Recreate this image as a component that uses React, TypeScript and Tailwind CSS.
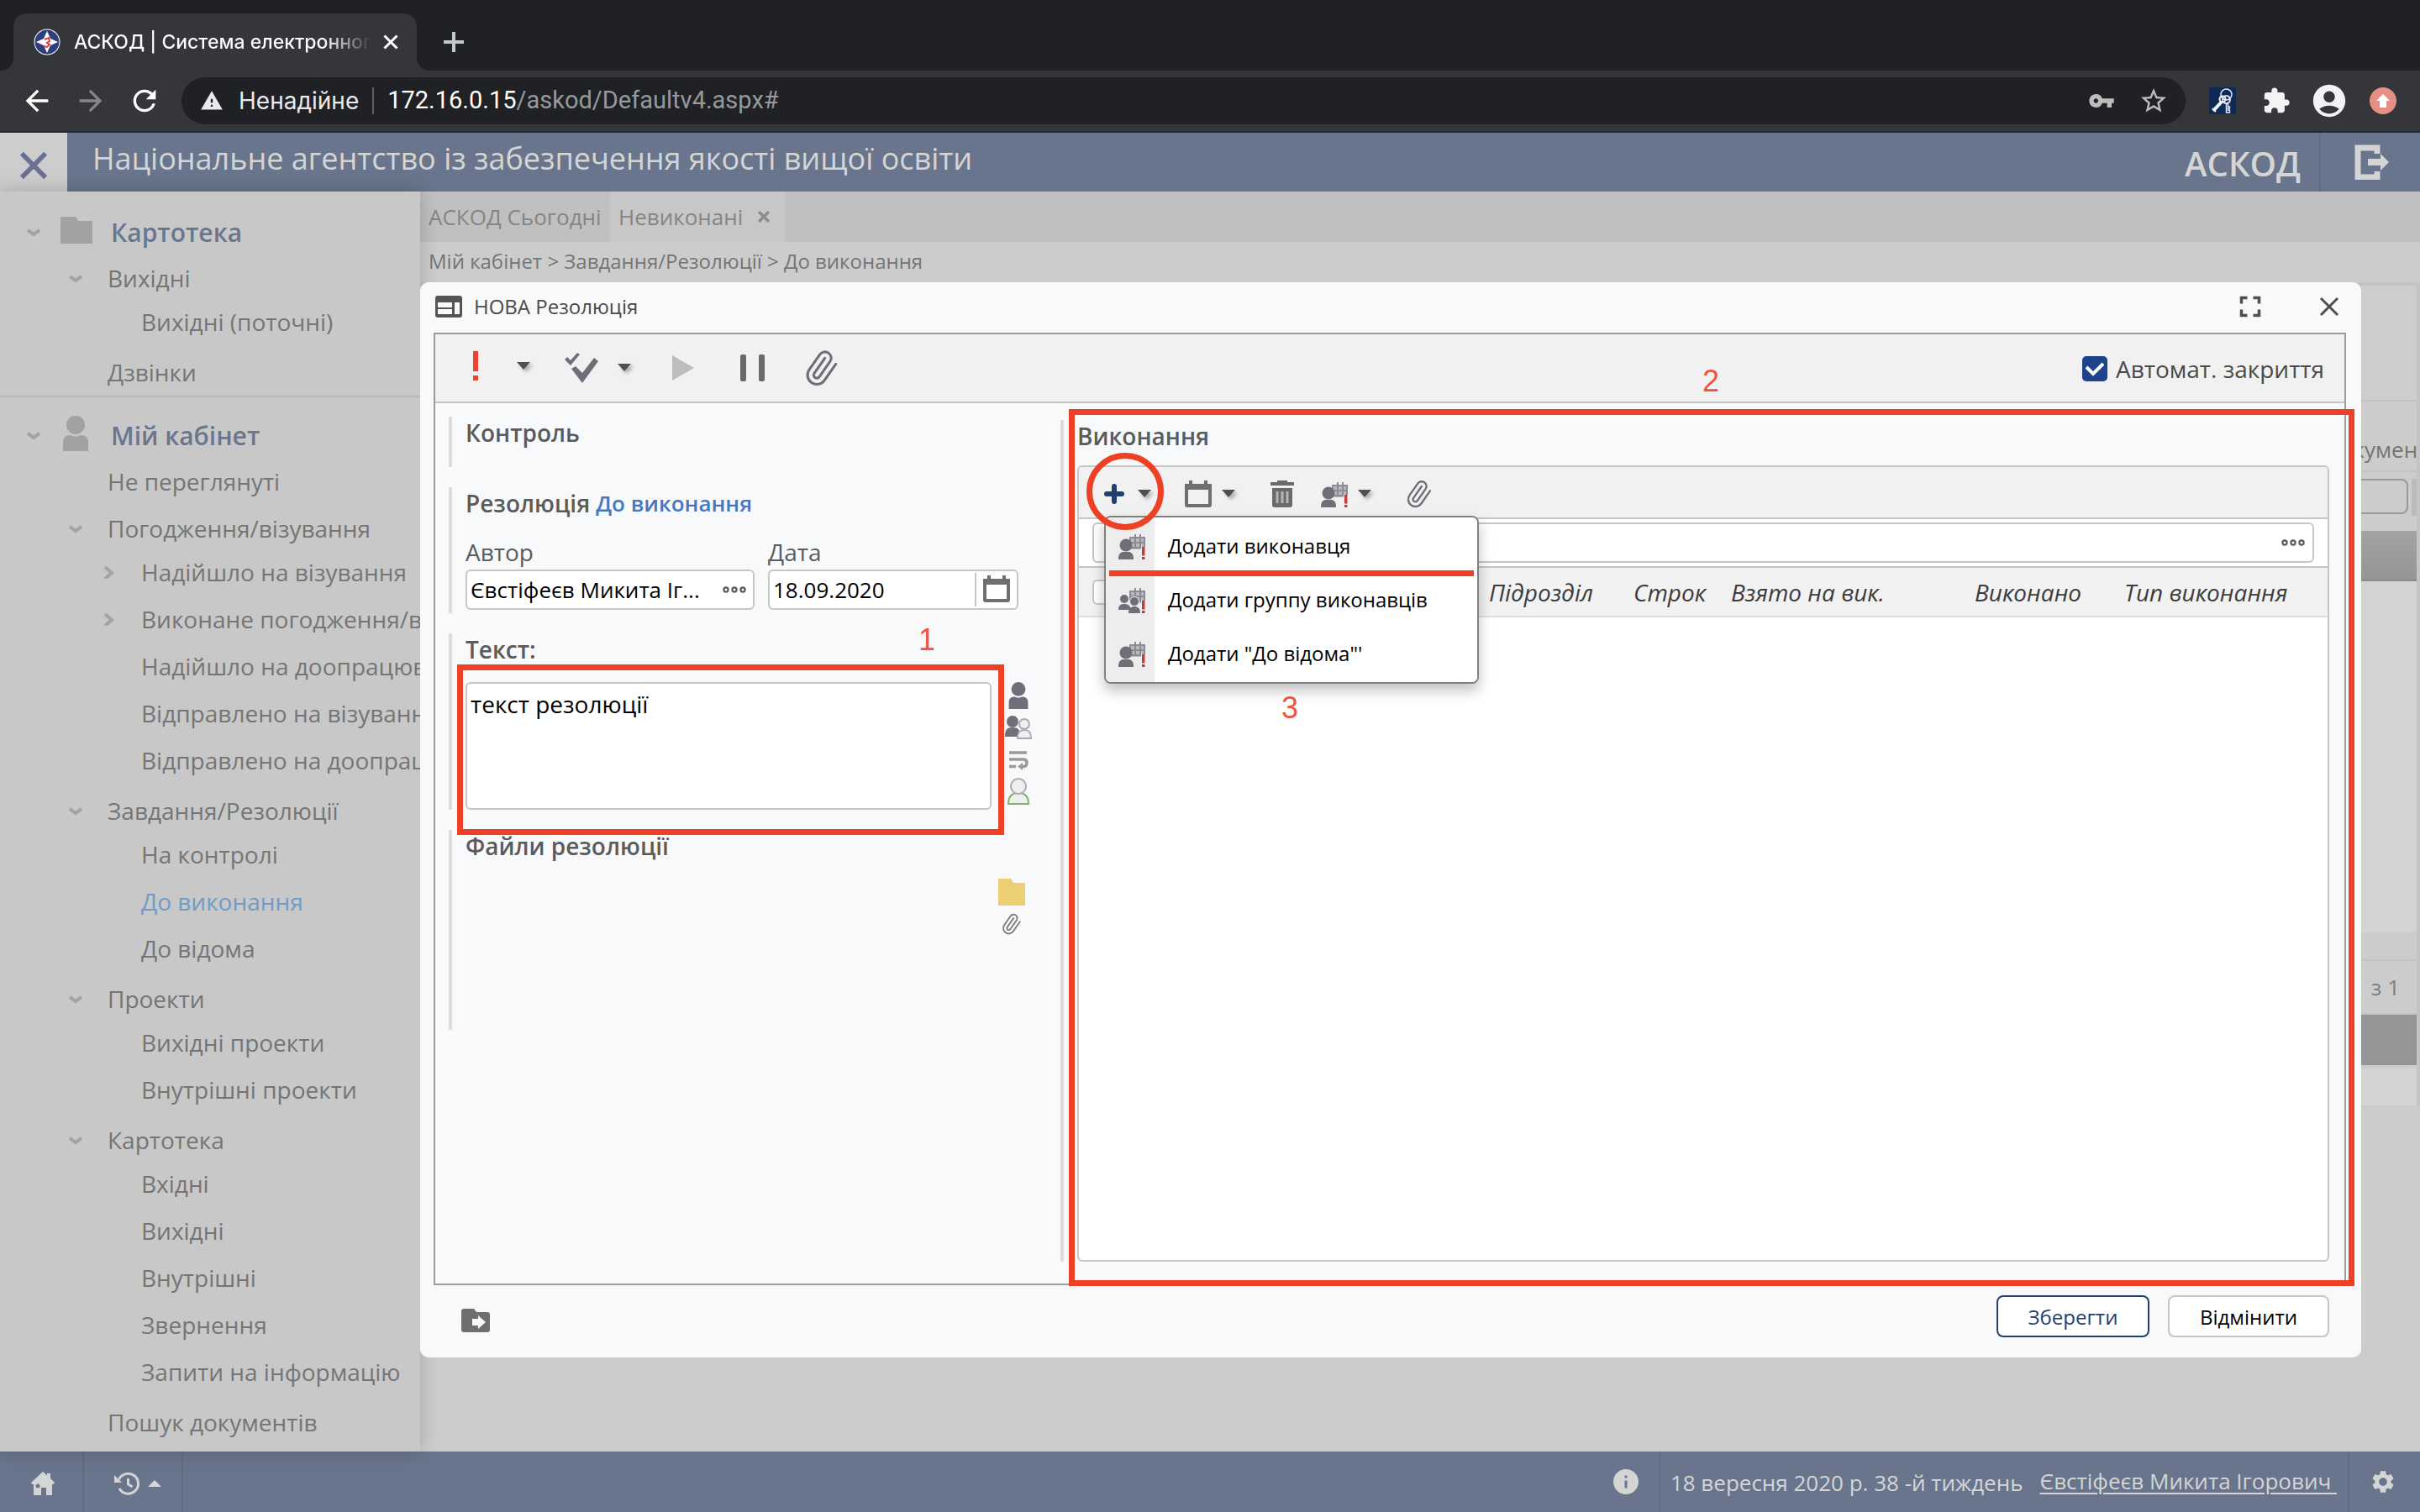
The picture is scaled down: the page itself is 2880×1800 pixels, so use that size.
import React from 'react';
import {
  MdAccountCircle,
  MdArrowBack,
  MdArrowForward,
  MdExtension,
  MdFullscreen,
  MdInfo,
  MdRefresh,
  MdSettings,
  MdStarBorder,
  MdVpnKey,
  MdWarning,
} from 'react-icons/md';

/* ---------- icons ---------- */

function Caret() {
  return (
    <svg viewBox="0 0 16 10" className="h-[10px] w-4 overflow-visible drop-shadow-[3px_3px_2px_rgba(0,0,0,0.3)]" aria-hidden="true">
      <path d="M0 0h16L8 9z" fill="#4f4f4f" />
    </svg>
  );
}

function Clip({ className }: { className: string }) {
  return (
    <svg viewBox="0 0 24 24" className={className} fill="none" stroke="currentColor" strokeWidth="1.7" strokeLinecap="round" strokeLinejoin="round" aria-hidden="true">
      <path transform="rotate(-10 12 12)" d="m21.44 11.05-9.19 9.19a6 6 0 0 1-8.49-8.49l8.57-8.57A4 4 0 1 1 18 8.84l-8.59 8.57a2 2 0 0 1-2.83-2.83l8.49-8.48" />
    </svg>
  );
}

function CalendarIcon() {
  return (
    <svg viewBox="0 0 32 32" className="size-8" aria-hidden="true">
      <path fillRule="evenodd" fill="#6f6f6f" d="M5 0h4v4h14V0h4v4h5v25a3 3 0 0 1-3 3H3a3 3 0 0 1-3-3V4h5zM4 11v17h24V11z" />
    </svg>
  );
}

function TrashIcon() {
  return (
    <svg viewBox="0 0 32 32" className="size-8" aria-hidden="true">
      <path fill="#6a6a6a" d="M10 0h12v2h8v4H2V2h8z" />
      <path fill="#6a6a6a" d="M4 9h24v20a3 3 0 0 1-3 3H7a3 3 0 0 1-3-3z" />
      <path d="M10 13v14M16 13v14M22 13v14" stroke="#b5b5b5" strokeWidth="3" />
    </svg>
  );
}

function AssigneeIcon({ group = false }: { group?: boolean }) {
  return (
    <svg viewBox="0 0 32 32" className="size-8" aria-hidden="true">
      <path d="M13 5h19v15H13z" fill="#b9b9be" />
      <path d="M13 6h19M14 12h18M14 18h18M14 5v14M20 2v17M26 2v17M31 5v14" stroke="#8b8b93" strokeWidth="2" fill="none" />
      {group ? (
        <g fill="#6f6f7a">
          <circle cx="7" cy="15" r="5" />
          <path d="M0 28c0-6 3-7 7-7s6 1 7 4v3z" />
          <circle cx="19" cy="18" r="5.5" stroke="#ededed" />
          <path d="M12 32c0-6 3-8 7-8s7 2 7 8z" />
        </g>
      ) : (
        <g fill="#6f6f7a">
          <circle cx="9" cy="15" r="7.5" />
          <path d="M0 32c0-5 1-8 5-9h8c4 1 5 4 5 9z" />
        </g>
      )}
      <path d="M27 17h5v15h-5z" fill="#ededed" />
      <path d="M28 17h3.4v10.500H28zM28 29h3.400v3H28z" fill="#c4393a" />
    </svg>
  );
}

function PersonIcon({ className }: { className: string }) {
  return (
    <svg viewBox="0 0 32 42" className={className} fill="currentColor" aria-hidden="true">
      <ellipse cx="16" cy="11" rx="11" ry="11" />
      <path d="M1 42V32c0-6 3-9 9-9 4 2 8 2 12 0 6 0 9 3 9 9v10z" />
    </svg>
  );
}

function FolderIcon({ className }: { className: string }) {
  return (
    <svg viewBox="0 0 32 26" preserveAspectRatio="none" className={className} fill="currentColor" aria-hidden="true">
      <path d="M0 0h15l3 4h14v22H0z" />
    </svg>
  );
}

function Chevron({ open }: { open: boolean }) {
  return (
    <svg viewBox="0 0 16 16" className="size-4" fill="none" stroke="#a3a3a3" strokeWidth="4" aria-hidden="true">
      {open ? <path d="M1 6l7 5 7-5" /> : <path d="M3 2l8 7-8 7" />}
    </svg>
  );
}

function Dots() {
  return (
    <svg viewBox="0 0 28 8" className="h-2 w-7" fill="none" stroke="#5b5b5b" strokeWidth="2.2" aria-hidden="true">
      <circle cx="4" cy="4" r="2.600" />
      <circle cx="14" cy="4" r="2.600" />
      <circle cx="24" cy="4" r="2.600" />
    </svg>
  );
}

function Cross({ className, width = 3 }: { className: string; width?: number }) {
  return (
    <svg viewBox="0 0 24 24" className={className} stroke="currentColor" strokeWidth={width} fill="none" aria-hidden="true">
      <path d="M2 2l20 20M22 2L2 22" />
    </svg>
  );
}

/* ---------- browser chrome ---------- */

function BrowserChrome() {
  return (
    <div className="shrink-0 border-b-2 border-[#28292b] bg-[#35363a] font-['Inter',sans-serif]">
      <div className="flex h-[84px] items-end bg-[#202124]">
        <div className="h-4 w-4 bg-[radial-gradient(circle_at_0_0,#202124_16px,#35363a_16.5px)]" />
        <div className="flex h-[68px] w-[480px] items-center rounded-t-2xl bg-[#35363a] pr-[22px] pl-6">
          <svg viewBox="0 0 32 32" className="size-8 shrink-0" aria-hidden="true">
            <circle cx="16" cy="16" r="15.500" fill="#fff" />
            <circle cx="16" cy="16" r="14.500" fill="#2f3e7d" />
            <path d="M16 3l4 9 9 4-9 4-4 9-4-9-9-4 9-4z" fill="#fff" />
            <path d="M13 13l5-2 1 4-3 2 3 2-3 3-4-1" fill="none" stroke="#d0453c" strokeWidth="2" />
          </svg>
          <span className="ml-4 flex-1 overflow-hidden whitespace-nowrap bg-[linear-gradient(to_right,#fff_84%,#35363a)] bg-clip-text text-[23px] font-medium text-transparent">
            АСКОД | Система електронного
          </span>
          <button type="button" aria-label="Закрити вкладку" className="ml-[14px] text-white">
            <Cross className="size-[18px]" width={4} />
          </button>
        </div>
        <div className="h-4 w-4 bg-[radial-gradient(circle_at_100%_0,#202124_16px,#35363a_16.5px)]" />
        <button type="button" aria-label="Нова вкладка" className="mb-[22px] ml-4 text-[#c4c7cb]">
          <svg viewBox="0 0 24 24" className="size-6" stroke="currentColor" strokeWidth="4" aria-hidden="true">
            <path d="M12 0v24M0 12h24" />
          </svg>
        </button>
      </div>
      <div className="flex h-[72px] items-center pr-7 pl-6">
        <button type="button" aria-label="Назад" className="text-white"><MdArrowBack className="size-10" /></button>
        <button type="button" aria-label="Вперед" className="ml-6 text-[#85868a]"><MdArrowForward className="size-10" /></button>
        <button type="button" aria-label="Оновити" className="ml-6 text-white"><MdRefresh className="size-10" /></button>
        <div className="ml-6 flex h-14 flex-1 items-center rounded-full bg-[#202124] pr-5 pl-[22px] text-[28px] text-[#e8eaed]">
          <MdWarning className="size-7 shrink-0" />
          <span className="ml-[18px] whitespace-nowrap">Ненадійне</span>
          <span className="mx-4 h-8 w-[2px] bg-[#5f6063]" />
          <span className="flex-1 font-['Roboto',sans-serif] text-[29px] whitespace-nowrap text-white">
            172.16.0.15<span className="text-[#96999d]">/askod/Defaultv4.aspx#</span>
          </span>
          <button type="button" aria-label="Паролі" className="text-[#bdbdbd]"><MdVpnKey className="size-8" /></button>
          <button type="button" aria-label="Закладка" className="ml-7 text-[#bdbdbd]"><MdStarBorder className="size-9" /></button>
        </div>
        <svg viewBox="0 0 32 32" className="ml-7 size-8" fill="none" aria-hidden="true">
          <path d="M0 0h32v32H0z" fill="#0e2a56" />
          <circle cx="20.500" cy="8.500" r="6.500" stroke="#dfe4ec" strokeWidth="1.500" />
          <path d="M5 28L15 17" stroke="#f3f5f8" strokeWidth="4" />
          <path d="M4 25l4 4" stroke="#f3f5f8" strokeWidth="2" />
          <circle cx="16" cy="14" r="3.500" stroke="#f3f5f8" strokeWidth="2" />
          <circle cx="20.500" cy="14.500" r="4.500" stroke="#dfe4ec" strokeWidth="2" />
          <path d="M20.500 19v11h4v-3h-2v-2h2v-2h-2v-4" stroke="#dfe4ec" strokeWidth="1.500" />
        </svg>
        <button type="button" aria-label="Розширення" className="ml-[31px] text-[#f1f3f4]"><MdExtension className="size-[34px]" /></button>
        <button type="button" aria-label="Профіль" className="ml-[23px] text-[#f1f3f4]"><MdAccountCircle className="size-[46px]" /></button>
        <button type="button" aria-label="Оновлення" className="ml-[25px]">
          <svg viewBox="0 0 32 32" className="size-8" aria-hidden="true">
            <circle cx="16" cy="16" r="16" fill="#e68f85" />
            <path d="M16 8l8 8h-4v8h-8v-8H8z" fill="#fff" />
          </svg>
        </button>
      </div>
    </div>
  );
}

/* ---------- application shell ---------- */

function AppHeader() {
  return (
    <header className="flex h-[70px] shrink-0 items-center bg-[#69758c] text-[#d5d5d5]">
      <button type="button" aria-label="Закрити меню" className="flex h-full w-20 items-center justify-center bg-[#cdcdcd] pt-2 text-[#6b7192]">
        <Cross className="size-[34px]" width={4} />
      </button>
      <h1 className="ml-[30px] flex-1 pb-2 text-4xl">Національне агентство із забезпечення якості вищої освіти</h1>
      <span className="mr-[22px] pt-1 text-[40px] font-semibold">АСКОД</span>
      <span className="h-full w-[2px] bg-[#616c83]" />
      <button type="button" aria-label="Вихід" className="mr-9 ml-10">
        <svg viewBox="0 0 42 42" className="size-[42px]" aria-hidden="true">
          <path d="M27 11V4H4v35h23v-7" fill="none" stroke="#d5d5d5" strokeWidth="7" />
          <path d="M16 17h15v-6l10 10-10 10v-6H16z" fill="#d5d5d5" />
        </svg>
      </button>
    </header>
  );
}

type Leaf = { label: string; active?: boolean; closed?: boolean };
type Branch = { label: string; items?: Leaf[] };

const archive: Branch[] = [
  { label: 'Вихідні', items: [{ label: 'Вихідні (поточні)' }] },
  { label: 'Дзвінки' },
];

const cabinet: Branch[] = [
  { label: 'Не переглянуті' },
  {
    label: 'Погодження/візування',
    items: [
      { label: 'Надійшло на візування', closed: true },
      { label: 'Виконане погодження/візування', closed: true },
      { label: 'Надійшло на доопрацювання' },
      { label: 'Відправлено на візування' },
      { label: 'Відправлено на доопрацювання' },
    ],
  },
  {
    label: 'Завдання/Резолюції',
    items: [{ label: 'На контролі' }, { label: 'До виконання', active: true }, { label: 'До відома' }],
  },
  { label: 'Проекти', items: [{ label: 'Вихідні проекти' }, { label: 'Внутрішні проекти' }] },
  {
    label: 'Картотека',
    items: [
      { label: 'Вхідні' },
      { label: 'Вихідні' },
      { label: 'Внутрішні' },
      { label: 'Звернення' },
      { label: 'Запити на інформацію' },
    ],
  },
  { label: 'Пошук документів' },
];

function Tree({ branches }: { branches: Branch[] }) {
  return (
    <ul>
      {branches.map((b) => (
        <li key={b.label}>
          <a href="#" className={b.items ? 'flex h-[52px] items-center pt-1 pl-[82px]' : 'flex h-14 items-center pl-[82px]'}>
            <span className="w-[46px] shrink-0">{b.items && <Chevron open />}</span>
            {b.label}
          </a>
          {b.items && (
            <ul className="pb-1">
              {b.items.map((it) => (
                <li key={it.label}>
                  <a href="#" className={it.active ? 'flex h-14 items-center pl-[122px] text-[#6f9bc6]' : 'flex h-14 items-center pl-[122px]'}>
                    <span className="w-[46px] shrink-0">{it.closed && <Chevron open={false} />}</span>
                    {it.label}
                  </a>
                </li>
              ))}
            </ul>
          )}
        </li>
      ))}
    </ul>
  );
}

function Sidebar() {
  return (
    <nav className="relative z-10 w-[500px] shrink-0 overflow-visible bg-[#c8c8c8] text-[28px] whitespace-nowrap text-[#757575] shadow-[0_0_22px_rgba(0,0,0,0.2)]">
      <div className="h-full overflow-hidden pt-[3px]">
        <a href="#" className="flex h-[72px] items-center pt-[18px] pl-8 text-[30px] font-semibold text-[#68768f]">
          <Chevron open />
          <span className="ml-6 flex w-[60px] text-[#a2a2a2]"><FolderIcon className="mb-1 h-8 w-[38px]" /></span>
          Картотека
        </a>
        <Tree branches={archive} />
        <div className="h-[2px] bg-[#bababa]" />
        <a href="#" className="flex h-[72px] items-center pt-[18px] pl-8 text-[30px] font-semibold text-[#68768f]">
          <Chevron open />
          <span className="ml-[26px] flex w-[58px] text-[#a2a2a2]"><PersonIcon className="mb-1 h-[42px] w-8" /></span>
          Мій кабінет
        </a>
        <Tree branches={cabinet} />
      </div>
    </nav>
  );
}

function Workspace() {
  return (
    <main className="flex min-w-0 flex-1 flex-col bg-[#cccccc] text-[#757575]">
      <div className="flex h-[60px] items-stretch bg-[#c0c0c0] text-[26px]">
        <a href="#" className="flex w-[226px] items-center pl-[10px] text-[#858585]">АСКОД Сьогодні</a>
        <div className="flex w-[208px] items-center bg-[#c7c7c7] pl-[10px] text-[#858585]">
          <a href="#">Невиконані</a>
          <button type="button" aria-label="Закрити" className="ml-[18px] text-[#8d8d8d]"><Cross className="size-[14px]" width={6} /></button>
        </div>
      </div>
      <div className="flex h-12 items-center pb-[2px] pl-[10px] text-2xl">Мій кабінет &gt; Завдання/Резолюції &gt; До виконання</div>
      <div className="flex flex-col border-t-4 border-r-4 border-[#c4c4c4]">
        <div className="h-[136px] bg-[#cdcdcd]" />
        <div className="flex h-[86px] items-center justify-end border-y-2 border-[#c2c2c2] pt-8 text-[26px] whitespace-nowrap">
          <div className="w-[106px] overflow-hidden">документ</div>
        </div>
        <div className="flex h-[70px] items-start gap-1 pt-2">
          <div className="h-[42px] flex-1 rounded-lg border-2 border-[#999999]" />
          <div className="h-11 w-[6px] bg-[#bbbbbb]" />
        </div>
        <div className="h-[60px] border-b-2 border-[#8b8b8b] bg-linear-to-b from-[#a3a3a3] to-[#959595]" />
        <div className="h-[418px] bg-[#d3d3d3]" />
        <div className="h-8" />
        <div className="flex h-[66px] items-center justify-end border-y-2 border-[#c2c2c2] pr-5 text-[26px] text-[#7d7d7d]">1 з 1</div>
        <div className="h-[60px] bg-[#949597]" />
        <div className="mt-1 h-11 bg-[#d4d4d4]" />
      </div>
    </main>
  );
}

function StatusBar() {
  return (
    <footer className="flex h-[72px] shrink-0 items-center bg-[#69758c] text-[26px] text-[#d5d5d5]">
      <a href="#" aria-label="Головна" className="flex h-full w-[100px] items-center justify-center border-r-2 border-[#616c83] pt-1 pl-1">
        <svg viewBox="0 0 28 28" className="size-7" fill="currentColor" aria-hidden="true">
          <path d="M14 0l5 4.500V2h4v6l5 5-1.500 2H25v13h-7v-9h-6v9H3V15H1.500L0 13z" />
          <circle cx="8" cy="17" r="2.500" fill="#69758c" />
        </svg>
      </a>
      <button type="button" aria-label="Історія" className="flex h-full w-[118px] items-center gap-[10px] border-r-2 border-[#616c83] pt-1 pl-9">
        <svg viewBox="0 0 30 28" className="h-7 w-[30px]" fill="none" stroke="currentColor" strokeWidth="3" aria-hidden="true">
          <path d="M5.500 9.500A12 12 0 1 1 6 20" />
          <path d="M0 4v9h9z" fill="currentColor" stroke="none" />
          <path d="M16.500 8v7l5 3" />
        </svg>
        <svg viewBox="0 0 16 8" className="h-2 w-4" fill="currentColor" aria-hidden="true"><path d="M0 8h16L8 0z" /></svg>
      </button>
      <div className="flex-1" />
      <button type="button" aria-label="Інформація"><MdInfo className="size-9" /></button>
      <span className="mr-3 ml-[21px] h-full w-[2px] bg-[#616c83]" />
      <span className="pt-[2px]">18 вересня 2020 р. 38 -й тиждень</span>
      <a href="#" className="ml-5 whitespace-pre pb-[2px] underline underline-offset-4">Євстіфеєв Микита Ігорович </a>
      <span className="ml-[13px] h-full w-[2px] bg-[#616c83]" />
      <button type="button" aria-label="Налаштування" className="mr-7 ml-6"><MdSettings className="size-8" /></button>
    </footer>
  );
}

/* ---------- dialog ---------- */

function DialogToolbar() {
  return (
    <div className="flex h-[82px] items-center border-b-2 border-[#c4c4c4] bg-[#f1f1f1]">
      <button type="button" aria-label="Важливість" className="ml-[38px] flex items-center gap-[39px] pb-1">
        <svg viewBox="0 0 20 36" className="h-9 w-5" fill="#f0412f" aria-hidden="true">
          <path d="M7 0h6v24H7zM7 29h6v6H7z" />
        </svg>
        <Caret />
      </button>
      <button type="button" aria-label="Виконання" className="ml-[41px] flex items-center gap-[23px]">
        <svg viewBox="0 0 40 36" className="h-9 w-10" fill="#6f6f7a" aria-hidden="true">
          <path d="M0 8l3-3 4 4 8-9 3 2L7 15z" />
          <path d="M8 19l5-3 8 8L35 6l5 4-19 26z" />
        </svg>
        <Caret />
      </button>
      <button type="button" aria-label="Розпочати" className="ml-12">
        <svg viewBox="0 0 28 30" className="h-[30px] w-7" fill="#bdbdbd" aria-hidden="true"><path d="M1 0l26 15L1 30z" /></svg>
      </button>
      <button type="button" aria-label="Призупинити" className="ml-[54px]">
        <svg viewBox="0 0 30 32" className="h-8 w-[30px]" fill="#6a6a6a" aria-hidden="true">
          <rect x="0" y="0" width="7" height="32" rx="2" />
          <rect x="22" y="0" width="7" height="32" rx="2" />
        </svg>
      </button>
      <button type="button" aria-label="Вкласти файл" className="ml-[45px] text-[#6f6f7a]"><Clip className="size-11" /></button>
      <label className="mr-6 ml-auto flex items-center gap-[10px] pt-[2px] text-[28px] text-[#4a4a4a]">
        <span className="grid size-[30px]">
          <input type="checkbox" defaultChecked className="col-start-1 row-start-1 size-[30px] appearance-none rounded-[5px] bg-[#1d438c]" />
          <svg viewBox="0 0 30 30" className="pointer-events-none col-start-1 row-start-1" fill="none" stroke="#fff" strokeWidth="4" aria-hidden="true">
            <path d="M5 13l8 8L25 9" />
          </svg>
        </span>
        Автомат. закриття
      </label>
    </div>
  );
}

function Section({ title, children, className }: { title: React.ReactNode; children?: React.ReactNode; className?: string }) {
  return (
    <section className={'border-l-4 border-[#dddddd] pl-4 ' + (className ?? '')}>
      <h3 className="flex h-10 items-center pb-[2px] text-[28px] font-semibold text-[#5b5b5b]">{title}</h3>
      {children}
    </section>
  );
}

function LeftForm() {
  return (
    <form className="flex w-[744px] shrink-0 flex-col gap-6 pt-4 pl-4">
      <Section title="Контроль" className="h-[60px]" />
      <Section title={<>Резолюція <a href="#" className="ml-[7px] text-[26px] text-[#4677c0]">До виконання</a></>} className="pb-1">
        <div className="mt-[18px] flex gap-4 text-[28px] text-[#5b5b5b]">
          <div className="w-[344px]">
            <label htmlFor="author" className="flex h-10 items-center pb-[2px]">Автор</label>
            <div className="flex h-12 items-center rounded-md border-2 border-[#c6c6c6] bg-white pr-2">
              <input id="author" defaultValue="Євстіфеєв Микита Іг..." className="min-w-0 flex-1 pl-1 text-[26px] text-black outline-none" />
              <button type="button" aria-label="Обрати автора"><Dots /></button>
            </div>
          </div>
          <div className="w-[298px]">
            <label htmlFor="date" className="flex h-10 items-center pb-[2px]">Дата</label>
            <div className="flex h-12 items-center rounded-md border-2 border-[#c6c6c6] bg-white">
              <input id="date" defaultValue="18.09.2020" className="min-w-0 flex-1 pl-1 text-[26px] text-black outline-none" />
              <button type="button" aria-label="Календар" className="flex h-10 w-[50px] items-center border-l-2 border-[#c6c6c6] pb-[2px] pl-2"><CalendarIcon /></button>
            </div>
          </div>
        </div>
      </Section>
      <Section title={<label htmlFor="text">Текст:</label>}>
        <div className="mt-[18px] flex gap-4">
          <div className="relative h-[152px] w-[626px]">
            <textarea id="text" defaultValue="текст резолюції" className="block size-full resize-none rounded-md border-2 border-[#c6c6c6] bg-white px-1 py-[3px] text-[28px] text-black outline-none" />
            <div className="pointer-events-none absolute -top-[21px] -right-[15px] -bottom-[30px] -left-[10px] border-[7px] border-[#ed4024]" />
            <span className="absolute -top-[68px] left-[539px] font-['Liberation_Sans',sans-serif] text-4xl leading-9 text-[#ee5343]">1</span>
          </div>
          <div className="flex flex-col gap-[6px]">
            <button type="button" aria-label="Особа" className="flex size-8 justify-center text-[#6f6f7a]"><PersonIcon className="h-8 w-[26px]" /></button>
            <button type="button" aria-label="Заступник" className="size-8">
              <svg viewBox="0 0 32 32" className="size-8" aria-hidden="true">
                <g fill="#6f6f7a"><circle cx="9" cy="9" r="7" /><path d="M0 27c0-8 2-11 9-11s9 3 9 11z" /></g>
                <g fill="#efefef" stroke="#aaaab0" strokeWidth="2"><circle cx="23" cy="12" r="6" /><path d="M15 29c0-8 3-10 8-10s8 2 8 10z" /></g>
              </svg>
            </button>
            <button type="button" aria-label="Перенесення" className="size-8">
              <svg viewBox="0 0 32 32" className="size-8" fill="none" stroke="#9b9b9b" strokeWidth="3.500" aria-hidden="true">
                <path d="M5 8h21M5 16h18a4.500 4.500 0 0 1 0 8.500h-2M5 24.500h8" />
                <path d="M15 24.500l6-4.500v9z" fill="#9b9b9b" stroke="none" />
              </svg>
            </button>
            <button type="button" aria-label="Додати особу" className="size-8">
              <svg viewBox="0 0 32 32" className="size-8" fill="#efefef" strokeWidth="2" aria-hidden="true">
                <path d="M4 31c0-9 4-13 12-13s12 4 12 13z" stroke="#86b06a" />
                <circle cx="16" cy="10" r="9" stroke="#aaaab0" />
              </svg>
            </button>
          </div>
        </div>
      </Section>
      <Section title="Файли резолюції" className="h-[238px]">
        <div className="mt-[18px] flex w-[666px] flex-col items-end gap-[6px]">
          <button type="button" aria-label="Папка" className="size-8 text-[#ecce74]"><FolderIcon className="size-8" /></button>
          <button type="button" aria-label="Вкласти файл" className="flex size-8 items-center justify-center text-[#7a7a7a]"><Clip className="size-[26px]" /></button>
        </div>
      </Section>
    </form>
  );
}

const menuItems = [
  { label: 'Додати виконавця', group: false },
  { label: 'Додати группу виконавців', group: true },
  { label: 'Додати "До відома"\'', group: false },
];

function AddMenu() {
  return (
    <div className="absolute top-[42px] left-1 z-20 w-[446px] rounded-lg border-2 border-[#808080] bg-white shadow-[0_8px_16px_rgba(0,0,0,0.25)]">
      <ul className="overflow-hidden rounded-md bg-[linear-gradient(to_right,#ededed_58px,#fff_58px)] pt-[2px] pb-[2px]">
        {menuItems.map((m) => (
          <li key={m.label}>
            <button type="button" className="flex h-16 w-full items-stretch text-left text-2xl whitespace-nowrap text-black">
              <span className="flex w-[58px] items-center justify-center pl-1"><AssigneeIcon group={m.group} /></span>
              <span className="flex items-center pl-4">{m.label}</span>
            </button>
          </li>
        ))}
      </ul>
      <div className="absolute top-[63px] right-1 left-1 h-[7px] bg-[#ed4024]" />
      <span className="absolute top-[209px] left-[209px] font-['Liberation_Sans',sans-serif] text-4xl leading-9 text-[#ee5343]">3</span>
    </div>
  );
}

function ExecutionPanel() {
  return (
    <section className="relative flex min-w-0 flex-1 flex-col pr-[18px] pb-[26px] pl-4">
      <h3 className="flex h-[74px] items-center pt-1 text-[28px] font-semibold text-[#5b5b5b]">Виконання</h3>
      <div className="flex flex-1 flex-col rounded-md border-2 border-[#c6c6c6] bg-white">
        <div className="flex h-[62px] items-center rounded-t border-b-2 border-[#c6c6c6] bg-[#f1f1f1] pt-1 pl-[26px]">
          <div className="relative">
            <button type="button" aria-label="Додати" className="flex items-center gap-3">
              <svg viewBox="0 0 32 32" className="size-8" stroke="#22406f" strokeWidth="6" strokeLinecap="round" aria-hidden="true">
                <path d="M16 7v18M7 16h18" />
              </svg>
              <Caret />
            </button>
            <AddMenu />
            <div className="pointer-events-none absolute -top-[33px] -left-[17px] z-30 size-[92px] rounded-full border-[7px] border-[#ed4024]" />
          </div>
          <button type="button" aria-label="Строк" className="ml-10 flex items-center gap-3"><CalendarIcon /><Caret /></button>
          <button type="button" aria-label="Видалити" className="ml-10"><TrashIcon /></button>
          <button type="button" aria-label="Виконавці" className="ml-[30px] flex items-center gap-3"><AssigneeIcon /><Caret /></button>
          <button type="button" aria-label="Вкласти файл" className="ml-10 text-[#6f6f7a]"><Clip className="size-[34px]" /></button>
        </div>
        <div className="border-b-2 border-[#c6c6c6] px-4 py-1">
          <div className="flex h-12 items-center rounded-md border-2 border-[#c6c6c6] pr-[9px]">
            <input aria-label="Виконавець" className="min-w-0 flex-1 pl-2 text-[26px] outline-none" />
            <button type="button" aria-label="Обрати виконавця"><Dots /></button>
          </div>
        </div>
        <table className="w-full table-fixed text-left text-[28px] whitespace-nowrap text-[#3c3c3c] italic">
          <colgroup>
            <col />
            <col className="w-[172px]" />
            <col className="w-[116px]" />
            <col className="w-[290px]" />
            <col className="w-[178px]" />
            <col className="w-[242px]" />
          </colgroup>
          <thead>
            <tr className="h-[58px] border-b-2 border-[#dfdfdf] bg-[#f2f2f2]">
              <th className="pl-4">
                <input type="checkbox" aria-label="Обрати всі" className="block size-[30px] appearance-none rounded-md border-2 border-[#c6c6c6] bg-white" />
              </th>
              <th className="font-normal">Підрозділ</th>
              <th className="font-normal">Строк</th>
              <th className="font-normal">Взято на вик.</th>
              <th className="font-normal">Виконано</th>
              <th className="font-normal">Тип виконання</th>
            </tr>
          </thead>
        </table>
      </div>
      <div className="pointer-events-none absolute top-[7px] -right-3 -bottom-[3px] left-[6px] border-[7px] border-[#ed4024]" />
      <span className="absolute -top-[44px] left-[760px] font-['Liberation_Sans',sans-serif] text-4xl leading-9 text-[#ee5343]">2</span>
    </section>
  );
}

function ResolutionDialog() {
  return (
    <div role="dialog" aria-label="НОВА Резолюція" className="absolute top-[108px] right-[70px] bottom-[112px] left-[500px] z-20 flex flex-col rounded-[10px] bg-[#f9f9f9] px-4 pb-3">
      <div className="flex h-[60px] shrink-0 items-center pb-[2px]">
        <svg viewBox="0 0 32 26" className="ml-[2px] h-[26px] w-8" aria-hidden="true">
          <path fillRule="evenodd" fill="#555" d="M3 0h26a3 3 0 0 1 3 3v20a3 3 0 0 1-3 3H3a3 3 0 0 1-3-3V3a3 3 0 0 1 3-3zM3 8v6h17V8zM3 16v6h17v-6zM23 8v14h6V8z" />
        </svg>
        <h2 className="ml-[14px] flex-1 text-2xl text-[#4a4a4a]">НОВА Резолюція</h2>
        <button type="button" aria-label="На весь екран" className="text-[#4f4f4f]"><MdFullscreen className="size-[42px]" /></button>
        <button type="button" aria-label="Закрити" className="mr-[10px] ml-[61px] text-[#4f4f4f]"><Cross className="size-6" width={3} /></button>
      </div>
      <div className="mr-[2px] flex min-h-0 flex-1 flex-col border-2 border-[#9a9c9d] bg-[#f8f9fb]">
        <DialogToolbar />
        <div className="flex min-h-0 flex-1">
          <LeftForm />
          <div className="mt-5 mb-[26px] w-1 shrink-0 bg-[#dddddd]" />
          <ExecutionPanel />
        </div>
      </div>
      <div className="flex h-[74px] shrink-0 items-center bg-[#f8f9fb] pr-[22px] pl-[33px] text-2xl">
        <button type="button" aria-label="Перемістити" className="pt-[10px]">
          <svg viewBox="0 0 34 28" className="h-7 w-[34px]" aria-hidden="true">
            <path d="M3 0h12l3 4h13a3 3 0 0 1 3 3v18a3 3 0 0 1-3 3H3a3 3 0 0 1-3-3V3a3 3 0 0 1 3-3z" fill="#6e6e6e" />
            <path d="M13 12h7V8l9 8-9 8v-4h-7z" fill="#f8f9fb" />
          </svg>
        </button>
        <button type="button" className="ml-auto h-[50px] w-[182px] rounded-lg border-2 border-[#22406f] bg-white pt-[2px] text-[#22406f]">Зберегти</button>
        <button type="button" className="ml-[22px] h-[50px] w-48 rounded-lg border-2 border-[#c6c6c6] bg-white pt-[2px] text-black">Відмінити</button>
      </div>
    </div>
  );
}

export default function App() {
  return (
    <div className="flex h-screen flex-col overflow-hidden font-['Open_Sans',sans-serif]">
      <BrowserChrome />
      <AppHeader />
      <div className="relative flex min-h-0 flex-1">
        <Sidebar />
        <Workspace />
        <ResolutionDialog />
      </div>
      <StatusBar />
    </div>
  );
}
